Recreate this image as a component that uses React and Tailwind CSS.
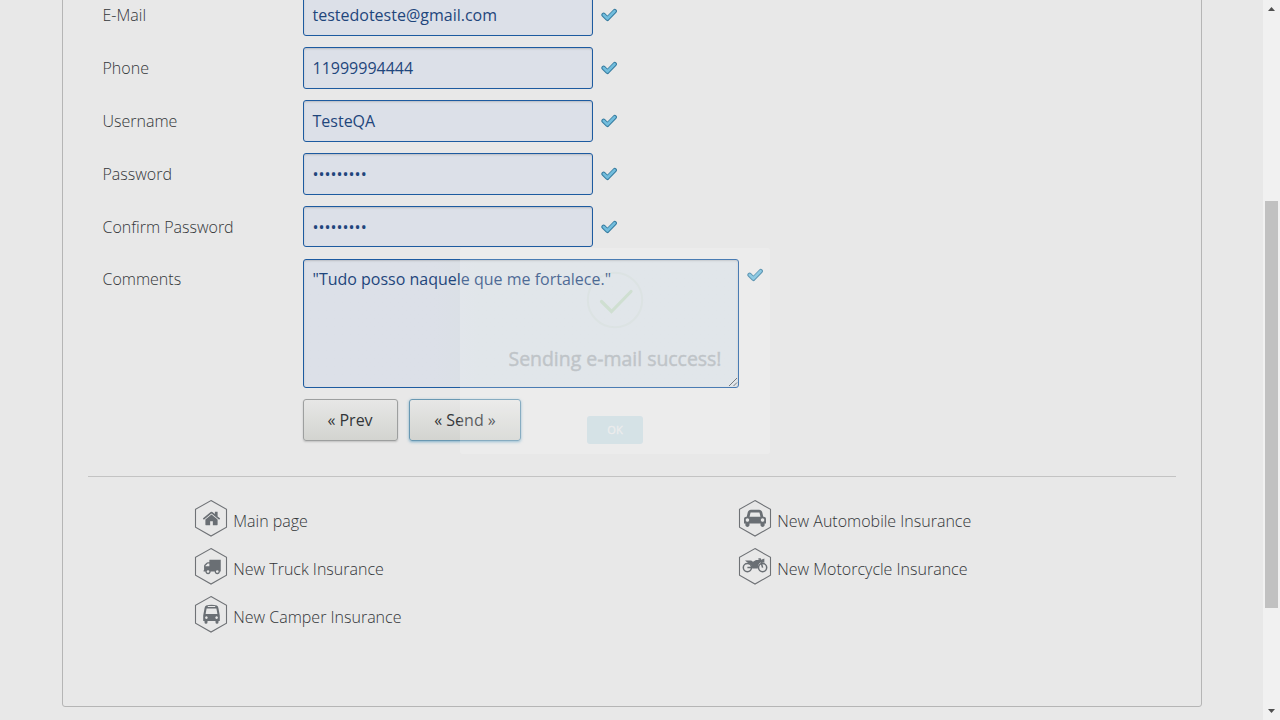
import React from "react";

function ValidMark() {
  return (
    <svg className="h-4 w-4 shrink-0" viewBox="0 0 16 16" fill="none">
      <path d="M2.6 7.9 L6.4 11.8 L13.7 4.2" stroke="#357b9f" strokeWidth="4.4" strokeLinecap="round" strokeLinejoin="round" />
      <path d="M2.7 7.8 L6.4 11.5 L13.6 4.2" stroke="#72bddd" strokeWidth="2.6" strokeLinecap="round" strokeLinejoin="round" />
    </svg>
  );
}

const fields = [
  { label: "E-Mail", value: "testedoteste@gmail.com" },
  { label: "Phone", value: "11999994444" },
  { label: "Username", value: "TesteQA" },
  { label: "Password", value: "•••••••••" },
  { label: "Confirm Password", value: "•••••••••", last: true },
];

function Field({ label, value, last }) {
  return (
    <div className="flex h-[53px] items-start">
      <div className="w-[200.5px] pt-[9px] font-light">{label}</div>
      <div
        className={`flex w-[290px] items-center rounded-[3px] border border-[#1d5ba0] bg-[#dce0e8] px-[8.5px] text-[#1f467c] shadow-[inset_0_1px_2px_rgba(0,0,0,0.16)] ${last ? "h-[41px]" : "h-[42px]"}`}
      >
        <span>{value}</span>
      </div>
      <div className="pt-[13px] pl-2">
        <ValidMark />
      </div>
    </div>
  );
}

const glyphs = {
  home: (
    <svg className="h-[19px] w-[19px]" viewBox="0 0 1792 1792" fill="currentColor">
      <path d="M1472 992v480q0 26-19 45t-45 19h-384v-384h-256v384h-384q-26 0-45-19t-19-45v-480q0-1 .5-3t.5-3l575-474 575 474q1 2 1 6zm223-69l-62 74q-8 9-21 11h-3q-13 0-21-7l-692-577-692 577q-12 8-24 7-13-2-21-11l-62-74q-8-10-7-23.5t11-21.5l719-599q32-26 76-26t76 26l244 204v-195q0-14 9-23t23-9h192q14 0 23 9t9 23v408l219 182q10 8 11 21.5t-7 23.5z" />
    </svg>
  ),
  truck: (
    <svg className="h-[18.5px] w-[18.5px] translate-x-[0.75px]" viewBox="0 0 1792 1792" fill="currentColor">
      <path d="M640 1408q0-52-38-90t-90-38-90 38-38 90 38 90 90 38 90-38 38-90zm-384-512h384v-256h-158q-13 0-22 9l-195 195q-9 9-9 22v30zm1280 512q0-52-38-90t-90-38-90 38-38 90 38 90 90 38 90-38 38-90zm256-1088v1024q0 15-4 26.5t-13.5 18.5-16.5 11.5-23.5 6-22.5 2-25.5 0-22.5-.5q0 106-75 181t-181 75-181-75-75-181h-384q0 106-75 181t-181 75-181-75-75-181h-64q-3 0-22.5.5t-25.5 0-22.5-2-23.5-6-16.5-11.5-13.5-18.5-4-26.5q0-26 19-45t45-19v-320q0-8-.5-35t0-38 2.5-34.5 6.5-37 14-30.5 22.5-30l198-198q19-19 50.5-32t58.5-13h160v-192q0-26 19-45t45-19h1024q26 0 45 19t19 45z" />
    </svg>
  ),
  car: (
    <svg className="h-[20px] w-[22px]" viewBox="0 0 2048 1792" fill="currentColor">
      <path d="M480 1088q0-66-47-113t-113-47-113 47-47 113 47 113 113 47 113-47 47-113zm36-320h1016l-89-357q-2-8-14-17.5t-21-9.5h-768q-9 0-21 9.5t-14 17.5zm1372 320q0-66-47-113t-113-47-113 47-47 113 47 113 113 47 113-47 47-113zm160-96v384q0 14-9 23t-23 9h-96v128q0 80-56 136t-136 56-136-56-56-136v-128h-1024v128q0 80-56 136t-136 56-136-56-56-136v-128h-96q-14 0-23-9t-9-23v-384q0-93 65.5-158.5t158.5-65.5h28l105-419q23-94 104-157.5t179-63.5h768q98 0 179 63.5t104 157.5l105 419h28q93 0 158.5 65.5t65.5 158.5z" />
    </svg>
  ),
  bus: (
    <svg className="h-[20px] w-[17px]" viewBox="0 0 17 20" fill="currentColor">
      <path
        fillRule="evenodd"
        d="M3.2 1.5 Q8.5 0 13.8 1.5 Q15.2 2 15.4 4 L16.8 11.5 V17 H15.5 V18.2 a1.5 1.5 0 0 1-3 0 V17 H4.5 V18.2 a1.5 1.5 0 0 1-3 0 V17 H0.2 V11.5 L1.6 4 Q1.8 2 3.2 1.5 Z M4.8 1.9 H12.2 V3.1 H4.8 Z M3.6 4.6 L2.6 10 H14.4 L13.4 4.6 Z M3.4 12.3 a1.3 1.3 0 1 0 0.01 0 Z M13.6 12.3 a1.3 1.3 0 1 0 0.01 0 Z"
      />
    </svg>
  ),
  motorcycle: (
    <svg className="h-[16px] w-[26px] -translate-y-px" viewBox="0 0 26 16" fill="none" stroke="currentColor">
      <circle cx="5.4" cy="10.6" r="4.1" strokeWidth="1.5" />
      <circle cx="20.6" cy="10.6" r="4.1" strokeWidth="1.5" />
      <path d="M5.4 10.6 H10 M16.4 2 H18.2 L20.6 10.6 M18.2 4.2 L21.6 2.6 V4.8 Z" strokeWidth="1.5" />
      <path d="M3 3.6 H9.2 L11 4.8 L14 3 H18 L18.8 5 Q16 7 15.8 11.4 H10.2 Q10 7 5.4 5.4 Z" fill="currentColor" stroke="none" />
    </svg>
  ),
};

function NavLink({ icon, children }) {
  return (
    <div className="flex h-12 items-start">
      <div className="grid h-[38px] w-[34px] shrink-0 place-items-center text-[#6a6f74]">
        <svg className="col-start-1 row-start-1 h-[38px] w-[34px]" viewBox="0 0 34 38" fill="none">
          <path d="M17 1.6 L32.5 10.3 V28.3 L17 37 L1.5 28.3 V10.3 Z" stroke="#6f7276" strokeWidth="1.1" />
        </svg>
        <div className="col-start-1 row-start-1">{glyphs[icon]}</div>
      </div>
      <span className="pt-[10px] pl-[5.25px] font-light">{children}</span>
    </div>
  );
}

function Dialog() {
  return (
    <div className="absolute top-[248px] left-[460px] flex h-[206px] w-[310px] flex-col items-center rounded-[3px] bg-white opacity-20">
      <svg className="mt-[23px] h-[58px] w-[58px]" viewBox="0 0 58 58" fill="none">
        <circle cx="29" cy="29" r="27.2" stroke="#e6efdf" strokeWidth="2" />
        <path d="M15.5 30.5 L25.5 40.5 L45 20.5" stroke="#a5dc86" strokeWidth="3.2" strokeLinecap="round" />
      </svg>
      <div className="mt-[16px] text-[19.45px] leading-[28px] whitespace-nowrap text-[#575757] [-webkit-text-stroke:0.5px_#575757]">Sending e-mail success!</div>
      <div className="mt-[43px] flex h-[28px] w-[56px] items-center justify-center rounded-[3px] bg-[#8ccbe3] text-[11px] text-white [-webkit-text-stroke:0.3px_white]">OK</div>
    </div>
  );
}

export default function App() {
  return (
    <div className="relative flex h-[720px] w-[1280px] overflow-hidden bg-[#e8e8e8] font-['Open_Sans',sans-serif] text-[16px] leading-[24px] text-[#333639]">
      <main className="w-[1263px] pl-[62px]">
        <section className="-mt-[7px] h-[714px] w-[1140px] rounded-[3px] border border-[#b5b5b5] px-[25px]">
          <div className="pl-[14.5px]">
            {fields.map((f) => (
              <Field key={f.label} {...f} />
            ))}
            <div className="flex h-[140px] items-start">
              <div className="w-[200.5px] pt-[8px] font-light">Comments</div>
              <div className="flex h-[129px] w-[436px] items-start justify-between rounded-[3px] border border-[#1d5ba0] bg-linear-to-r from-[#dce0e8] from-30% to-[#dae0e5] to-40% pt-[7px] pl-[8.5px] text-[#1f467c] shadow-[inset_0_1px_2px_rgba(0,0,0,0.16)]">
                <span>"Tudo posso naquele que me fortalece."</span>
                <svg className="h-[10px] w-[10px] self-end" viewBox="0 0 10 10" stroke="#444950" strokeWidth="0.9">
                  <path d="M1 9 L9 1 M5.5 9 L9 5.5" />
                </svg>
              </div>
              <div className="pt-2 pl-2">
                <ValidMark />
              </div>
            </div>
            <div className="flex gap-[11px] pl-[200.5px]">
              <div className="flex h-[42px] w-[95px] items-center justify-center rounded-[3px] border border-[#9d9f9f] bg-linear-to-b from-[#e7e7e6] to-[#d3d4d0] pr-px shadow-[0_1px_2px_rgba(0,0,0,0.18)]">« Prev</div>
              <div className="flex h-[42px] w-[112px] items-center justify-center rounded-[3px] border border-[#6998b2] bg-linear-to-b from-[#e7e7e6] to-[#d3d4d0] shadow-[0_1px_3px_rgba(70,145,185,0.65)]">« Send »</div>
            </div>
          </div>
          <div className="mt-[35px] border-t border-[#c3c3c3]" />
          <nav className="grid grid-cols-[544px_1fr] pt-[22px] pl-[106px]">
            <NavLink icon="home">Main page</NavLink>
            <NavLink icon="car">New Automobile Insurance</NavLink>
            <NavLink icon="truck">New Truck Insurance</NavLink>
            <NavLink icon="motorcycle">New Motorcycle Insurance</NavLink>
            <NavLink icon="bus">New Camper Insurance</NavLink>
          </nav>
        </section>
      </main>
      <aside className="flex w-[17px] flex-col items-center bg-[#f1f1f1]">
        <svg className="mt-[7px] h-[4px] w-[7px]" viewBox="0 0 7 4" fill="#505050">
          <path d="M0 4 L3.5 0 L7 4 Z" />
        </svg>
        <div className="mt-[190px] h-[407px] w-[13px] bg-[#c1c1c1]" />
        <svg className="mt-[101px] h-[4px] w-[7px]" viewBox="0 0 7 4" fill="#505050">
          <path d="M0 0 H7 L3.5 4 Z" />
        </svg>
      </aside>
      <Dialog />
    </div>
  );
}
